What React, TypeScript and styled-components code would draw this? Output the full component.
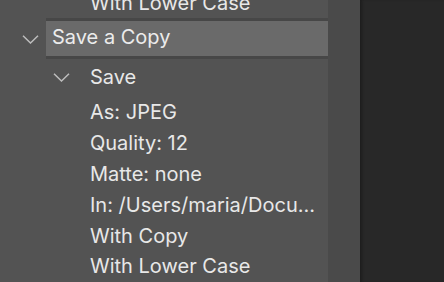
import { createGlobalStyle, styled } from "styled-components";

const GlobalStyle = createGlobalStyle`
	html, body {
		margin: 0;
		padding: 0;
		background: #282828;
		overflow: hidden;
	}
	body {
		font-family: Inter, "Liberation Sans", Arial, sans-serif;
		-webkit-font-smoothing: antialiased;
	}
`;

type Item = { label: string; depth: number; kind: "leaf" | "group" | "action" };

const items: Item[] = [
	{ label: "With Lower Case", depth: 2, kind: "leaf" },
	{ label: "Save a Copy", depth: 0, kind: "action" },
	{ label: "Save", depth: 1, kind: "group" },
	{ label: "As: JPEG", depth: 2, kind: "leaf" },
	{ label: "Quality: 12", depth: 2, kind: "leaf" },
	{ label: "Matte: none", depth: 2, kind: "leaf" },
	{ label: "In: /Users/maria/Docu...", depth: 2, kind: "leaf" },
	{ label: "With Copy", depth: 2, kind: "leaf" },
	{ label: "With Lower Case", depth: 2, kind: "leaf" },
];

function Chevron() {
	return (
		<svg width="17" height="9" viewBox="0 0 17 9" fill="none">
			<path d="M1 0.8 L8.5 8 L16 0.8" stroke="#bdbdbd" strokeWidth="1.5" />
		</svg>
	);
}

function App() {
	return (
		<>
			<GlobalStyle />
			<Screen>
				<Panel>
					<List>
						{items.map((item, i) => {
							if (item.kind === "action") {
								return (
									<ActionRow key={i}>
										<Toggle>
											<Chevron />
										</Toggle>
										<ActionLabel>{item.label}</ActionLabel>
									</ActionRow>
								);
							}
							if (item.kind === "group") {
								return (
									<GroupRow key={i}>
										<Chevron />
										<Label>{item.label}</Label>
									</GroupRow>
								);
							}
							return (
								<LeafRow key={i}>
									<Label>{item.label}</Label>
								</LeafRow>
							);
						})}
					</List>
				</Panel>
				<Gutter />
				<Canvas />
			</Screen>
		</>
	);
}

export default App;

const Screen = styled.div`
	display: flex;
	height: 100vh;
	width: 100vw;
`;

const Panel = styled.div`
	width: 328px;
	flex-shrink: 0;
	background: #535353;
	overflow: hidden;
`;

const List = styled.div`
	display: flex;
	flex-direction: column;
	margin-top: -12.4px;
`;

const Label = styled.span`
	color: #e8e8e8;
	font-size: 20px;
	white-space: nowrap;
`;

const LeafRow = styled.div`
	height: 30.8px;
	line-height: 30.8px;
	padding-left: 90px;
	display: flex;
`;

const ActionRow = styled.div`
	display: flex;
	height: 41px;
	margin-top: -0.4px;
`;

const Toggle = styled.div`
	width: 46px;
	flex-shrink: 0;
	display: flex;
	align-items: center;
	padding-left: 22px;
	padding-top: 1px;
	box-sizing: border-box;
`;

const ActionLabel = styled.div`
	flex: 1;
	background: #6a6a6a;
	border-top: 3px solid #474747;
	border-bottom: 3px solid #474747;
	padding-left: 6px;
	line-height: 32px;
	color: #ececec;
	font-size: 20px;
	white-space: nowrap;
`;

const GroupRow = styled.div`
	display: flex;
	align-items: flex-start;
	gap: 20px;
	height: 38.4px;
	padding-left: 53px;
	line-height: 36px;

	svg {
		margin-top: 14px;
		flex-shrink: 0;
	}
`;

const Gutter = styled.div`
	width: 32px;
	flex-shrink: 0;
	background: #4a4a4a;
`;

const Canvas = styled.div`
	flex: 1;
	background: #282828;
	box-shadow: inset 3px 0 3px -1px #1e1e1e;
`;
